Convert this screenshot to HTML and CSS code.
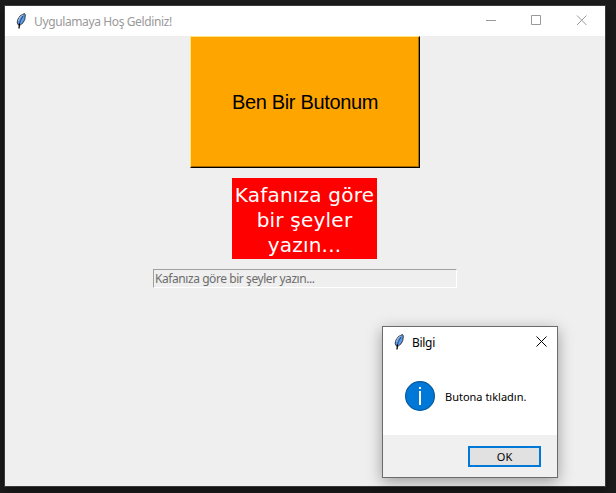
FILE: index.html
```html
<!DOCTYPE html>
<html lang="tr">
<head>
<meta charset="utf-8">
<title>Uygulamaya Hoş Geldiniz!</title>
<link rel="stylesheet" href="styles.css">
</head>
<body>
<svg class="defs" width="0" height="0">
  <symbol id="feather" viewBox="0 0 10 16">
    <path d="M8.5.5 9.3 2 8.8 6.500 7 9.800 4.300 12 2.200 11.800 1.200 9.500 2 6 4.500 2.500Z" fill="#5b9bea" stroke="#26292e" stroke-width=".9"/>
    <path d="M7 1.700 4 4 2.200 8" fill="none" stroke="#aebccb" stroke-width="1"/>
    <path d="M7 3 4.500 7.500 3 12" fill="none" stroke="#1c3c70" stroke-width=".9"/>
    <path d="M3.500 10.500 3 15.500" stroke="#000" stroke-width="1.300"/>
  </symbol>
</svg>
<main class="window">
  <header class="titlebar">
    <svg class="feather"><use href="#feather"/></svg>
    <span class="title">Uygulamaya Hoş Geldiniz!</span>
    <svg class="controls" viewBox="0 0 101 11" fill="none" stroke="#999">
      <path d="M0 5.500H10M45.500.500H54.500V9.500H45.500ZM91 .500l9.500 9.500M100.500.500L91 10"/>
    </svg>
  </header>
  <section class="content">
    <button class="big-button"><span>Ben Bir Butonum</span></button>
    <div class="label">Kafanıza göre<br>bir şeyler<br>yazın...</div>
    <div class="entry"><span>Kafanıza göre bir şeyler yazın...</span></div>
  </section>
</main>
<aside class="dialog">
  <header class="dialog-title">
    <svg class="feather"><use href="#feather"/></svg>
    <span class="dialog-name">Bilgi</span>
    <svg class="close" viewBox="0 0 11 11" fill="none" stroke="#000"><path d="M.500.500l10 10M10.500.500l-10 10"/></svg>
  </header>
  <div class="message">
    <svg class="info" viewBox="0 0 30 30"><circle cx="15" cy="15" r="14.400" fill="#0078d7" stroke="#075a9e" stroke-width="1.200"/><path d="M14 6h2v2h-2zM14 10h2v14h-2z" fill="#fff"/></svg>
    <span class="message-text">Butona tıkladın.</span>
  </div>
  <footer class="actions"><button class="ok"><span>OK</span></button></footer>
</aside>
</body>
</html>
```
FILE: styles.css
```css
* { box-sizing: border-box; }
body {
  margin: 0;
  width: 616px;
  height: 493px;
  padding: 5px 0 0 4px;
  overflow: hidden;
  background: #1c1c1c;
  font: 12px "Noto Sans", "Open Sans", sans-serif;
}
.defs { position: absolute; }
button { font: inherit; border-radius: 0; padding: 0; margin: 0; }
.window {
  width: 602px;
  height: 482px;
  border: 1px solid #3b3b3d;
  background: #efefef;
  box-shadow: 0 3px 9px rgba(0, 0, 0, .5);
  overflow: hidden;
}
.titlebar {
  display: flex;
  align-items: center;
  height: 30px;
  padding: 0 18px 0 11px;
  background: #fff;
}
.feather { width: 10px; height: 16px; flex: none; }
.title { margin-left: 8px; color: #999; white-space: nowrap; letter-spacing: -.38px; }
.controls { width: 101px; height: 11px; margin-left: auto; margin-top: -1px; }
.content { display: flex; flex-direction: column; align-items: center; }
.big-button {
  width: 230px;
  height: 132px;
  border: 1px solid;
  border-color: #ffe57a #000 #000 #ffe57a;
  box-shadow: inset -1px -1px #a66b00;
  background: #ffa500;
  color: #000;
  font: 20px "Liberation Sans", Arial, sans-serif;
  letter-spacing: -.33px;
}
.label {
  width: 145px;
  height: 81px;
  margin: 10px 1px 10px 0;
  padding-top: 5px;
  background: #f00;
  color: #fff;
  font: 20px/25px "DejaVu Sans", Verdana, sans-serif;
  letter-spacing: .22px;
  text-align: center;
  white-space: nowrap;
}
.entry {
  width: 304px;
  height: 19px;
  border: 1px solid;
  border-color: #a0a0a0 #fff #fff #a0a0a0;
  padding-left: 1px;
  line-height: 18px;
  color: #6d6d6d;
  letter-spacing: -.43px;
}
.dialog {
  position: absolute;
  left: 382px;
  top: 326px;
  width: 176px;
  height: 152px;
  border: 1px solid #6b6b6b;
  background: #fff;
  box-shadow: 0 4px 14px rgba(0, 0, 0, .35);
  color: #000;
}
.dialog-title { display: flex; align-items: center; height: 30px; padding: 0 10px 0 11px; }
.dialog-name { margin-left: 8px; letter-spacing: -.3px; }
.close { width: 11px; height: 11px; margin-left: auto; margin-top: -2px; }
.message { display: flex; align-items: center; height: 78px; padding-left: 22px; }
.info { width: 30px; height: 30px; }
.message-text { margin-left: 10px; white-space: nowrap; font-size: 11px; }
.actions {
  display: flex;
  justify-content: flex-end;
  height: 42px;
  padding: 11px 16px 0 0;
  background: #f0f0f0;
}
.ok { width: 73px; height: 21px; border: 2px solid #0078d7; background: #e1e1e1; color: #000; font-size: 11px; line-height: 17px; }
```
